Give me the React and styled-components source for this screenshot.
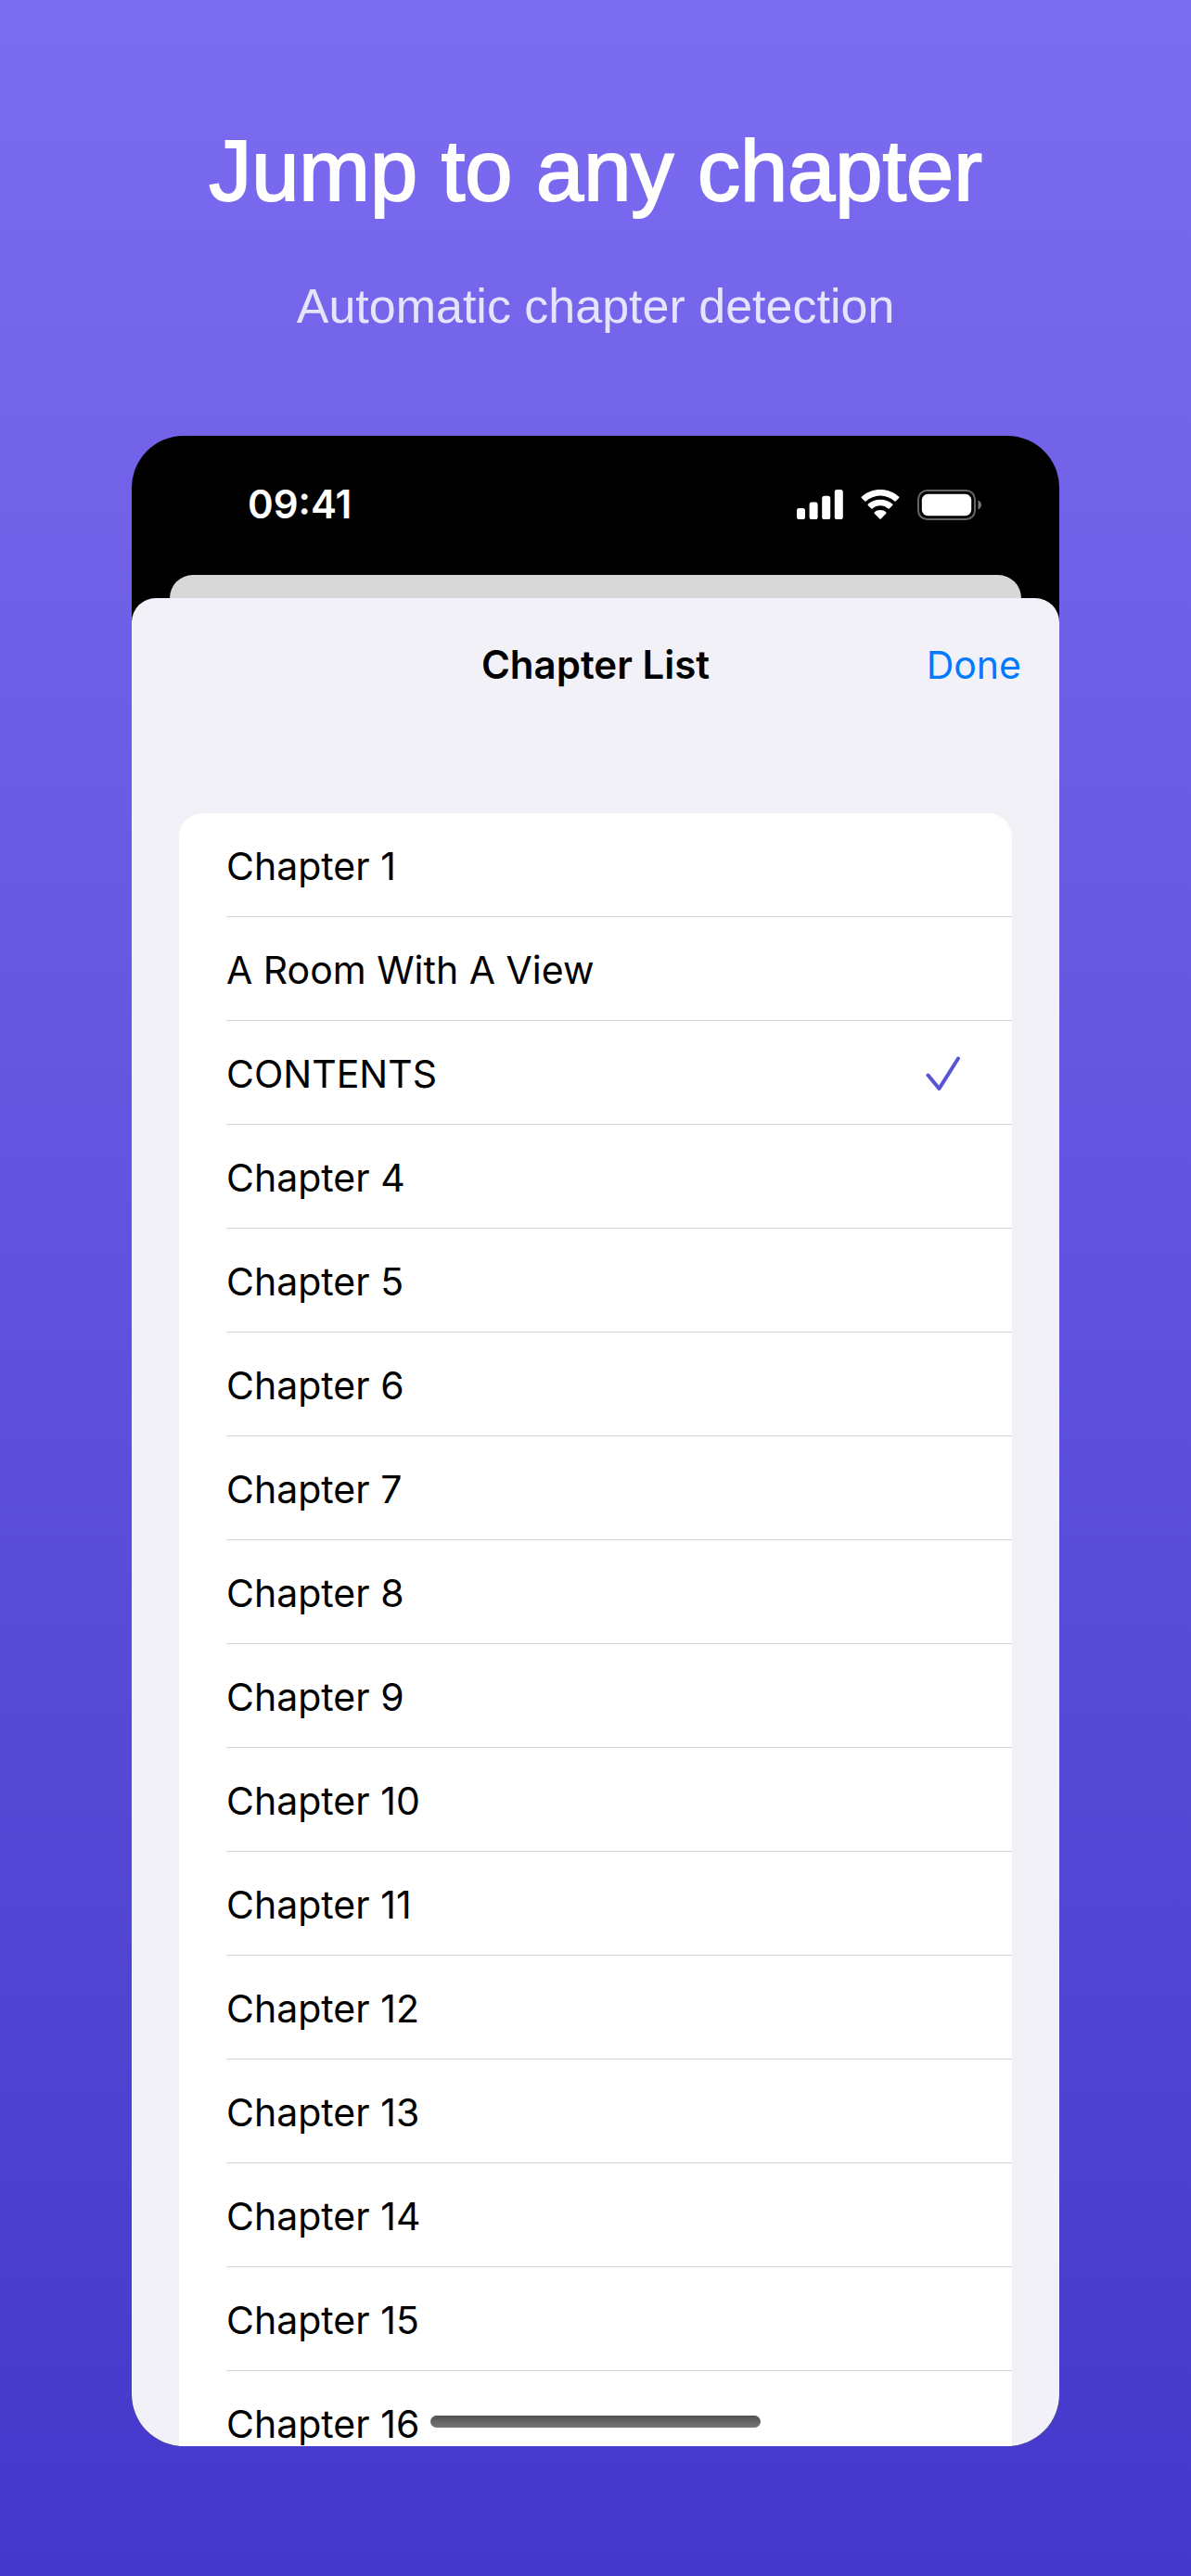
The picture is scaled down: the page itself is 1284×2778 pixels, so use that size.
import React, { useState } from 'react';

import styled, { createGlobalStyle } from 'styled-components';

const GlobalStyle = createGlobalStyle`
  *, *::before, *::after {
    box-sizing: border-box;
  }
  body {
    margin: 0;
  }
`;

const Page = styled.main`
  display: flex;
  flex-direction: column;
  height: 100vh;
  padding: 126px 142px 140px;
  background: linear-gradient(180deg, #7c6cf0 0%, #4338ca 100%);
`;

const Hero = styled.header`
  margin-bottom: 96px;
  font-family: 'Liberation Sans', Arial, sans-serif;
  text-align: center;
`;

const HeroTitle = styled.h1`
  margin: 0 0 44px;
  color: #fff;
  font-size: 92px;
  font-weight: 400;
  line-height: 116px;
  -webkit-text-stroke: 2px #fff;
`;

const HeroText = styled.p`
  margin: 0;
  color: rgba(255, 255, 255, 0.82);
  font-size: 52px;
  line-height: 88px;
`;

const Phone = styled.section`
  position: relative;
  display: flex;
  flex: 1;
  flex-direction: column;
  min-height: 0;
  overflow: hidden;
  border-radius: 56px;
  background: #000;
  font-family: Inter, sans-serif;
  font-size: 41px;
  line-height: 52px;
`;

const StatusBar = styled.div`
  display: flex;
  flex-shrink: 0;
  align-items: center;
  justify-content: space-between;
  height: 150px;
  padding: 0 83px 2px 125px;
  color: #fff;
`;

const Clock = styled.time`
  font-size: 42px;
  font-weight: 600;
`;

const StatusIcons = styled.div`
  display: flex;
  align-items: center;
  gap: 18px;
`;

const BackSheet = styled.div`
  flex-shrink: 0;
  height: 25px;
  margin: 0 41px;
  border-radius: 25px 25px 0 0;
  background: #d8d8d8;
`;

const Sheet = styled.div`
  flex: 1;
  min-height: 0;
  overflow: hidden;
  border-radius: 26px 26px 0 0;
  background: #f2f1f7;
`;

const SheetHeader = styled.div`
  display: grid;
  grid-template-columns: 1fr auto 1fr;
  align-items: center;
  height: 144px;
  margin-bottom: 88px;
  padding: 0 41px;
`;

const SheetTitle = styled.h2`
  grid-column: 2;
  margin: 0;
  color: #000;
  font-size: 42px;
  font-weight: 600;
`;

const DoneButton = styled.button`
  justify-self: end;
  padding: 0;
  border: 0;
  background: none;
  color: #007aff;
  font: inherit;
  cursor: pointer;
`;

const ChapterList = styled.ul`
  margin: 0 51px;
  padding: 0;
  overflow: hidden;
  border-radius: 26px;
  background: #fff;
  list-style: none;
`;

const ChapterItem = styled.li`
  height: 112px;
  padding-left: 51px;
`;

const ChapterButton = styled.button`
  display: flex;
  align-items: center;
  justify-content: space-between;
  width: 100%;
  height: 100%;
  padding: 2px 55px 0 0;
  border: 0;
  border-bottom: 1px solid #d3d3d5;
  background: none;
  color: #000;
  font: inherit;
  text-align: left;
  cursor: pointer;
`;

const HomeIndicator = styled.div`
  position: absolute;
  bottom: 20px;
  left: 50%;
  width: 356px;
  height: 13px;
  border-radius: 7px;
  background: linear-gradient(#505050, #787878);
  transform: translateX(-50%);
`;

const SignalIcon = () => (
    <svg width="50" height="32" viewBox="0 0 50 32" fill="#fff" aria-hidden="true">
        <rect x="0" y="20" width="9" height="12" rx="2.6" />
        <rect x="13.6" y="13.6" width="9" height="18.4" rx="2.6" />
        <rect x="27.2" y="6.8" width="9" height="25.2" rx="2.6" />
        <rect x="40.8" y="0" width="9" height="32" rx="2.6" />
    </svg>
);

const WifiIcon = () => (
    <svg width="44" height="32" viewBox="0 0 44 32" fill="#fff" aria-hidden="true">
        <path d="M22 6.4c5.8 0 11.2 2.3 15.4 6.2.4.3.9.3 1.2 0l3.6-3.5c.4-.4.4-1 0-1.4C36.5 2.5 29.5 0 22 0S7.5 2.5 1.8 7.7c-.4.4-.4 1 0 1.4l3.6 3.5c.3.3.8.3 1.2 0C10.8 8.7 16.2 6.4 22 6.4z" />
        <path d="M22 17.2c3.2 0 6.2 1.2 8.5 3.3.4.3.9.3 1.2 0l3.5-3.5c.4-.4.4-1 0-1.4C31.6 12.5 27 10.7 22 10.7s-9.6 1.8-13.2 4.9c-.4.4-.4 1 0 1.4l3.5 3.5c.3.3.8.3 1.2 0 2.3-2.1 5.3-3.3 8.5-3.3z" />
        <path d="M28.3 25.7c.4-.4.4-1 0-1.3-1.8-1.5-4-2.3-6.3-2.3s-4.5.8-6.3 2.3c-.4.3-.4.9 0 1.3l5.6 5.7c.4.4 1 .4 1.4 0l5.6-5.7z" />
    </svg>
);

const BatteryIcon = () => (
    <svg width="70" height="33" viewBox="0 0 70 33" aria-hidden="true">
        <rect x="1" y="1" width="61" height="31" rx="9.5" fill="none" stroke="#666" strokeWidth="2" />
        <rect x="4.8" y="4.8" width="53.4" height="23.4" rx="6.5" fill="#fff" />
        <path d="M65.5 11.5v10c2-.8 3.5-2.7 3.5-5s-1.5-4.2-3.5-5z" fill="#777" />
    </svg>
);

const CheckIcon = () => (
    <svg width="38" height="38" viewBox="0 0 38 38" fill="none" stroke="#5854d6" strokeWidth="4" strokeLinecap="round" strokeLinejoin="round" aria-hidden="true">
        <path d="M2.5 20.5L14.5 35L35 2.5" />
    </svg>
);

const titles = { 2: 'A Room With A View', 3: 'CONTENTS' };

const chapters = Array.from({ length: 16 }, (_, i) => ({
    id: i + 1,
    title: titles[i + 1] || `Chapter ${i + 1}`,
}));

const App = () => {
    const [current, setCurrent] = useState(3);

    return (
        <>
            <GlobalStyle />
            <Page>
                <Hero>
                    <HeroTitle>Jump to any chapter</HeroTitle>
                    <HeroText>Automatic chapter detection</HeroText>
                </Hero>
                <Phone>
                    <StatusBar>
                        <Clock>09:41</Clock>
                        <StatusIcons>
                            <SignalIcon />
                            <WifiIcon />
                            <BatteryIcon />
                        </StatusIcons>
                    </StatusBar>
                    <BackSheet />
                    <Sheet>
                        <SheetHeader>
                            <SheetTitle>Chapter List</SheetTitle>
                            <DoneButton type="button">Done</DoneButton>
                        </SheetHeader>
                        <ChapterList>
                            {chapters.map(({ id, title }) => (
                                <ChapterItem key={id}>
                                    <ChapterButton type="button" aria-pressed={id === current} onClick={() => setCurrent(id)}>
                                        {title}
                                        {id === current && <CheckIcon />}
                                    </ChapterButton>
                                </ChapterItem>
                            ))}
                        </ChapterList>
                    </Sheet>
                    <HomeIndicator />
                </Phone>
            </Page>
        </>
    );
};

export default App;
